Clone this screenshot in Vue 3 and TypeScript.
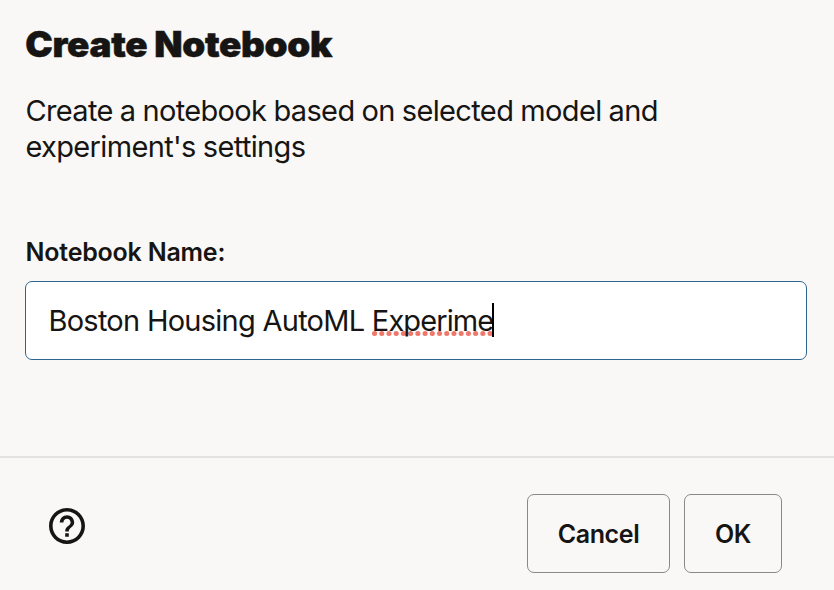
<script setup lang="ts">
import { ref } from 'vue'

const name = ref<{ text: string; flagged: string }>({ text: 'Boston Housing AutoML ', flagged: 'Experime' })
</script>

<template>
  <main class="dialog">
    <section class="content">
      <h1>Create Notebook</h1>
      <p class="description">Create a notebook based on selected model and experiment's settings</p>
      <div class="label">Notebook Name:</div>
      <div class="field" role="textbox" tabindex="0">
        <span class="value">{{ name.text }}<span class="flagged">{{ name.flagged }}<svg class="squiggle" width="122" height="5" viewBox="0 0 122 5"><line x1="2.5" y1="2.5" x2="119" y2="2.5" /></svg><i class="caret"></i></span></span>
      </div>
    </section>
    <footer>
      <svg class="help" width="36" height="36" viewBox="2 2 20 20">
        <path d="M11 18h2v-2h-2v2zm1-16C6.48 2 2 6.48 2 12s4.48 10 10 10 10-4.48 10-10S17.52 2 12 2zm0 18c-4.41 0-8-3.59-8-8s3.59-8 8-8 8 3.59 8 8-3.59 8-8 8zm0-14c-2.21 0-4 1.79-4 4h2c0-1.1.9-2 2-2s2 .9 2 2c0 2-3 1.75-3 5h2c0-2.25 3-2.5 3-5 0-2.21-1.79-4-4-4z" />
      </svg>
      <div class="actions">
        <button class="cancel">Cancel</button>
        <button class="ok">OK</button>
      </div>
    </footer>
  </main>
</template>

<style>
body { margin: 0; background: #f9f8f7; }
</style>

<style scoped>
.dialog { box-sizing: border-box; width: 834px; height: 590px; display: flex; flex-direction: column; overflow: hidden; background: #f9f8f7; color: #161513; font-family: Inter, sans-serif; }
.content { box-sizing: border-box; height: 456px; padding: 24px 27px 0 25px; }
h1 { margin: 0; padding-left: 0.3px; font-size: 35px; line-height: 40px; font-weight: 900; letter-spacing: -0.3px; -webkit-text-stroke: 0.5px #161513; white-space: nowrap; transform: scaleX(1.053); transform-origin: left center; }
.description { margin: 29px 0 0; width: 690px; font-size: 29px; line-height: 36px; letter-spacing: -0.64px; word-spacing: -0.5px; padding-left: 0.4px; }
.label { margin-top: 69px; font-size: 25px; line-height: 36px; font-weight: 600; letter-spacing: -0.22px; padding-left: 0.5px; }
.field { box-sizing: border-box; display: flex; align-items: center; height: 79px; margin-top: 11px; padding-left: 22.5px; background: #fff; border: 1px solid #2c6690; border-radius: 7px; outline: none; }
.value { font-size: 29px; line-height: 36px; white-space: pre; letter-spacing: -0.75px; word-spacing: 0.1px; }
.flagged { position: relative; display: inline-block; isolation: isolate; letter-spacing: -0.9px; }
.squiggle { position: absolute; left: 0; top: 28px; z-index: -1; }
.squiggle line { stroke: #f0786b; stroke-width: 5; stroke-linecap: round; stroke-dasharray: 0.1 7.12; }
.caret { position: absolute; right: -1px; top: 0; width: 2px; height: 34px; background: #000; }
footer { box-sizing: border-box; height: 134px; display: flex; align-items: flex-start; justify-content: space-between; padding: 36px 52px 0 49px; border-top: 2px solid #e3e2e0; }
.help { margin-top: 14.4px; fill: #161513; }
.actions { display: flex; gap: 14px; }
button { box-sizing: border-box; height: 79px; padding: 1px 0 0; border: 1px solid #8b8985; border-radius: 7px; background: transparent; color: #161513; font: 600 25px/36px Inter, sans-serif; letter-spacing: -0.4px; }
.cancel { width: 143px; }
.ok { width: 98px; }
</style>
